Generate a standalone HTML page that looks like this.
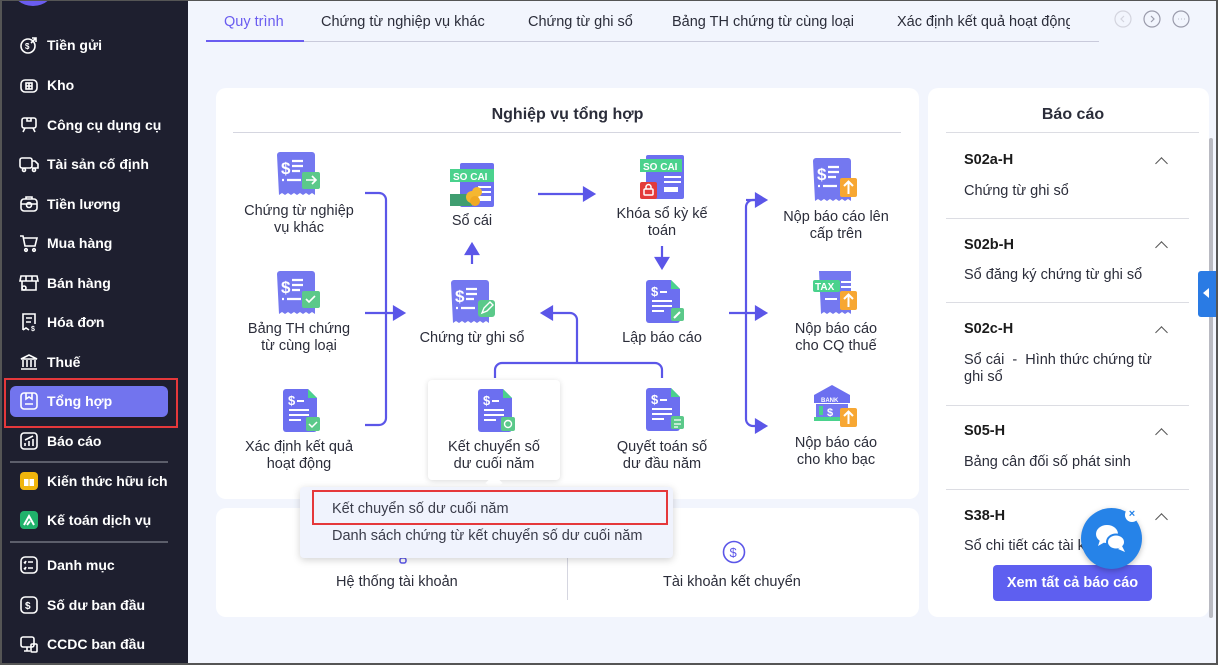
<!DOCTYPE html>
<html><head><meta charset="utf-8">
<style>
*{box-sizing:border-box;margin:0;padding:0}
body{width:1218px;height:665px;overflow:hidden;background:#f2f5fd;font-family:"Liberation Sans","DejaVu Sans",sans-serif;position:relative;color:#2b2d3a}
.abs{position:absolute}
#frame{position:absolute;left:0;top:0;width:1218px;height:665px;border:1px solid #555;border-left:2px solid #555;border-right:2px solid #555;border-bottom:2px solid #555;pointer-events:none;z-index:50}
#side{position:absolute;left:0;top:0;width:188px;height:665px;background:#1e1f2f}
.si{position:absolute;left:19px;color:#fff;font-weight:600;font-size:14px;height:20px;line-height:20px;display:flex;align-items:center}
.si svg{width:20px;height:20px;margin-right:8px;flex:none}
.tab{position:absolute;top:14px;font-size:14.5px;color:#2b2d3a}
.card{position:absolute;background:#fff;border-radius:10px}
.lbl{position:absolute;text-align:center;font-size:14.5px;line-height:17px;color:#2b2d3a;width:150px}
.rh{position:absolute;left:964px;font-weight:bold;font-size:14.5px;color:#1b1b1b}
.rt{position:absolute;left:964px;font-size:14.5px;color:#2b2d3a;line-height:17px}
.hr{position:absolute;left:946px;width:243px;height:1px;background:#dcdde3}
.chev{position:absolute;left:1157px;width:9px;height:9px;border-left:1.5px solid #555;border-top:1.5px solid #555;transform:rotate(45deg)}
</style></head><body>
<div id="side">
 <div class="abs" style="left:12px;top:-30px;width:42px;height:36px;border-radius:50%;background:#fff;border:5px solid #6a5cf0"></div>
 <div class="abs" style="left:10px;top:386px;width:158px;height:31px;background:#7274ee;border-radius:6px"></div>
 <div class="abs" style="left:4px;top:378px;width:174px;height:50px;border:2px solid #e5383b"></div>
 <div class="abs" style="left:10px;top:461px;width:158px;height:2px;background:#5c5e6b"></div>
 <div class="abs" style="left:10px;top:541px;width:158px;height:2px;background:#5c5e6b"></div>
 <div class="si" style="top:35px"><svg viewBox="0 0 20 20" fill="none" stroke="#fff" stroke-width="1.6"><circle cx="9" cy="11" r="7"/><path d="M13 3h4v4M17 3l-5 5"/><text x="6" y="14" font-size="8" fill="#fff" stroke="none">$</text></svg>Tiền gửi</div>
 <div class="si" style="top:75px"><svg viewBox="0 0 20 20" fill="none" stroke="#fff" stroke-width="1.6"><rect x="2" y="5" width="16" height="12" rx="4"/><rect x="7" y="8" width="6" height="6"/><path d="M10 8v6M7 11h6"/></svg>Kho</div>
 <div class="si" style="top:115px"><svg viewBox="0 0 20 20" fill="none" stroke="#fff" stroke-width="1.6"><rect x="3" y="3" width="14" height="10" rx="2"/><path d="M6 13l-2 4M14 13l2 4M8 3v3h4V3"/></svg>Công cụ dụng cụ</div>
 <div class="si" style="top:154px"><svg viewBox="0 0 20 20" fill="none" stroke="#fff" stroke-width="1.6"><rect x="1" y="4" width="12" height="10" rx="2"/><path d="M13 7h3l3 3v4h-6"/><circle cx="5" cy="16" r="1.5"/><circle cx="15" cy="16" r="1.5"/></svg>Tài sản cố định</div>
 <div class="si" style="top:194px"><svg viewBox="0 0 20 20" fill="none" stroke="#fff" stroke-width="1.6"><rect x="2" y="5" width="16" height="12" rx="3"/><path d="M7 5V3h6v2M2 10h16"/><circle cx="10" cy="11" r="2.5"/></svg>Tiền lương</div>
 <div class="si" style="top:233px"><svg viewBox="0 0 20 20" fill="none" stroke="#fff" stroke-width="1.6"><path d="M1 3h3l2 10h10l2-8H5"/><circle cx="7" cy="17" r="1.3"/><circle cx="15" cy="17" r="1.3"/></svg>Mua hàng</div>
 <div class="si" style="top:273px"><svg viewBox="0 0 20 20" fill="none" stroke="#fff" stroke-width="1.6"><path d="M3 8V17h14V8M2 3h16l1 5H1z"/><path d="M7 3v5M13 3v5"/><circle cx="5" cy="15" r="2"/></svg>Bán hàng</div>
 <div class="si" style="top:312px"><svg viewBox="0 0 20 20" fill="none" stroke="#fff" stroke-width="1.6"><path d="M4 18V2h12v10M7 6h6M7 10h5M4 18l3-2 3 2"/><text x="12" y="19" font-size="7" fill="#fff" stroke="none">$</text></svg>Hóa đơn</div>
 <div class="si" style="top:352px"><svg viewBox="0 0 20 20" fill="none" stroke="#fff" stroke-width="1.6"><path d="M2 7l8-4 8 4zM4 8v7M8 8v7M12 8v7M16 8v7M2 17h16"/></svg>Thuế</div>
 <div class="si" style="top:391px"><svg viewBox="0 0 20 20" fill="none" stroke="#fff" stroke-width="1.6"><rect x="2" y="2" width="16" height="16" rx="3"/><path d="M7 2v6l3-2 3 2V2M6 13h8"/></svg>Tổng hợp</div>
 <div class="si" style="top:431px"><svg viewBox="0 0 20 20" fill="none" stroke="#fff" stroke-width="1.6"><rect x="2" y="2" width="16" height="16" rx="3"/><path d="M6 15v-3M10 15v-5M14 15V8M6 9l8-4"/></svg>Báo cáo</div>
 <div class="si" style="top:471px"><svg viewBox="0 0 20 20"><rect x="1" y="1" width="18" height="18" rx="4" fill="#f0b50c"/><path d="M5 8h10v7H5z" fill="#fff"/><path d="M10 8v7" stroke="#f0b50c"/></svg>Kiến thức hữu ích</div>
 <div class="si" style="top:510px"><svg viewBox="0 0 20 20"><rect x="1" y="1" width="18" height="18" rx="4" fill="#20b26b"/><path d="M5 15l5-9 5 9M8 15l3-4" stroke="#fff" stroke-width="2" fill="none"/></svg>Kế toán dịch vụ</div>
 <div class="si" style="top:555px"><svg viewBox="0 0 20 20" fill="none" stroke="#fff" stroke-width="1.6"><rect x="2" y="2" width="16" height="16" rx="4"/><path d="M9 7h5M9 13h5M5 7l1 1 1-2M5 13l1 1 1-2"/></svg>Danh mục</div>
 <div class="si" style="top:595px"><svg viewBox="0 0 20 20" fill="none" stroke="#fff" stroke-width="1.6"><rect x="2" y="2" width="16" height="16" rx="4"/><text x="6" y="14" font-size="10" fill="#fff" stroke="none">$</text></svg>Số dư ban đầu</div>
 <div class="si" style="top:634px"><svg viewBox="0 0 20 20" fill="none" stroke="#fff" stroke-width="1.6"><rect x="2" y="3" width="13" height="10" rx="2"/><path d="M5 17h6M8 13v4"/><rect x="12" y="10" width="6" height="8" rx="1"/></svg>CCDC ban đầu</div>
</div>

<div class="tab" style="left:224px;color:#6a5cf0">Quy trình</div>
<div class="tab" style="left:321px">Chứng từ nghiệp vụ khác</div>
<div class="tab" style="left:528px">Chứng từ ghi sổ</div>
<div class="tab" style="left:672px">Bảng TH chứng từ cùng loại</div>
<div class="tab" style="left:897px;width:173px;overflow:hidden;white-space:nowrap">Xác định kết quả hoạt động</div>
<div class="abs" style="left:206px;top:41px;width:893px;height:1px;background:#c9cadb"></div>
<div class="abs" style="left:206px;top:40px;width:98px;height:2px;background:#6a5cf0"></div>
<svg class="abs" style="left:1114px;top:10px" width="80" height="20" fill="none" stroke-width="1.2"><circle cx="9" cy="9" r="8" stroke="#d3d4de"/><path d="M10 6l-3 3 3 3" stroke="#d3d4de"/><circle cx="38" cy="9" r="8" stroke="#9a9bab"/><path d="M37 6l3 3-3 3" stroke="#9a9bab"/><circle cx="67" cy="9" r="8" stroke="#9a9bab"/><path d="M64 9h.5M67 9h.5M70 9h.5" stroke="#9a9bab"/></svg>

<div class="card" style="left:216px;top:88px;width:703px;height:411px"></div>
<div class="abs" style="left:216px;top:106px;width:703px;text-align:center;font-weight:bold;font-size:16px;color:#2b2d3a">Nghiệp vụ tổng hợp</div>
<div class="abs" style="left:233px;top:132px;width:668px;height:1px;background:#d5d6e0"></div>

<svg class="abs" style="left:216px;top:88px" width="703" height="411" fill="none" stroke="#5b56e8" stroke-width="2.2">
 <path d="M149 105h14a7 7 0 0 1 7 7v218a7 7 0 0 1-7 7h-14"/>
 <path d="M149 225h30"/><path d="M178 219l10 6-10 6z" fill="#5b56e8"/>
 <path d="M256 176v-12"/><path d="M250 166l6-10 6 10z" fill="#5b56e8"/>
 <path d="M322 106h48"/><path d="M368 100l10 6-10 6z" fill="#5b56e8"/>
 <path d="M446 158v14"/><path d="M440 170l6 10 6-10z" fill="#5b56e8"/>
 <path d="M279 290v-8a7 7 0 0 1 7-7h153a7 7 0 0 1 7 7v8"/>
 <path d="M361 275v-43a7 7 0 0 0-7-7h-20"/><path d="M336 219l-10 6 10 6z" fill="#5b56e8"/>
 <path d="M513 225h30"/>
 <path d="M543 112h-6a7 7 0 0 0-7 7v212a7 7 0 0 0 7 7h6"/>
 <path d="M530 112h12"/><path d="M540 106l10 6-10 6z" fill="#5b56e8"/>
 <path d="M540 219l10 6-10 6z" fill="#5b56e8"/>
 <path d="M540 332l10 6-10 6z" fill="#5b56e8"/>
</svg>

<div class="abs" style="left:428px;top:380px;width:132px;height:100px;background:#fff;border-radius:4px;box-shadow:0 1px 6px rgba(0,0,0,.15)"></div>

<svg width="0" height="0" style="position:absolute">
 <defs>
  <g id="rc"><path d="M0 3a3 3 0 0 1 3-3h32a3 3 0 0 1 3 3v40l-3-2-3 2-3-2-3 2-3-2-3 2-3-2-3 2-3-2-3 2-3-2-3 2z" fill="#7478f0"/><text x="4" y="22" font-size="17" font-weight="bold" fill="#fff" font-family="Liberation Sans">$</text><path d="M15 9h11M15 14h11M15 19h8M5 28h2M10 28h14" stroke="#fff" stroke-width="2.2"/></g>
  <g id="dc"><path d="M0 3a3 3 0 0 1 3-3h22l9 9v31a3 3 0 0 1-3 3H3a3 3 0 0 1-3-3z" fill="#6c6ff0"/><path d="M25 0v9h9z" fill="#4ad28d"/><text x="5" y="16" font-size="13" font-weight="bold" fill="#fff" font-family="Liberation Sans">$</text><path d="M14 12h7M6 21h20M6 26h20M6 31h12" stroke="#fff" stroke-width="2"/></g>
 </defs>
</svg>

<svg class="abs" style="left:277px;top:152px" width="46" height="46"><use href="#rc"/><rect x="25" y="20" width="18" height="17" rx="2" fill="#5bc98a"/><path d="M29 28h10M35 24l4 4-4 4" stroke="#fff" stroke-width="1.6" fill="none"/></svg>
<div class="lbl" style="left:224px;top:203px">Chứng từ nghiệp<br>vụ khác</div>
<svg class="abs" style="left:277px;top:271px" width="46" height="46"><use href="#rc"/><rect x="25" y="20" width="18" height="17" rx="2" fill="#5bc98a"/><path d="M29 28l3 3 6-6" stroke="#fff" stroke-width="1.6" fill="none"/></svg>
<div class="lbl" style="left:224px;top:321px">Bảng TH chứng<br>từ cùng loại</div>
<svg class="abs" style="left:283px;top:389px" width="46" height="46"><use href="#dc"/><rect x="23" y="28" width="14" height="14" rx="2" fill="#5bc98a"/><path d="M26 35l3 3 5-5" stroke="#fff" stroke-width="1.5" fill="none"/></svg>
<div class="lbl" style="left:224px;top:439px">Xác định kết quả<br>hoạt động</div>
<svg class="abs" style="left:450px;top:163px" width="46" height="46"><rect x="10" y="0" width="34" height="44" rx="2" fill="#6c6ff0"/><rect x="0" y="6" width="44" height="13" fill="#4ad28d"/><text x="3" y="17" font-size="10" font-weight="bold" fill="#fff" font-family="Liberation Sans">SO CAI</text><path d="M28 24h13M28 29h13" stroke="#fff" stroke-width="2"/><rect x="28" y="33" width="13" height="5" fill="#fff"/><rect x="0" y="31" width="22" height="12" fill="#3f9e70"/><circle cx="22" cy="34" r="6" fill="#f5b731"/><circle cx="27" cy="29" r="5" fill="#f5b731"/><circle cx="25" cy="38" r="5" fill="#f0a823"/></svg>
<div class="lbl" style="left:397px;top:213px">Sổ cái</div>
<svg class="abs" style="left:451px;top:280px" width="46" height="46"><use href="#rc"/><rect x="27" y="20" width="17" height="17" rx="3" fill="#5bc98a"/><path d="M31 33l2-5 6-6 3 3-6 6z" stroke="#fff" stroke-width="1.4" fill="none"/></svg>
<div class="lbl" style="left:397px;top:330px">Chứng từ ghi sổ</div>
<svg class="abs" style="left:640px;top:155px" width="46" height="46"><rect x="6" y="0" width="38" height="44" rx="2" fill="#6c6ff0"/><rect x="0" y="4" width="42" height="13" fill="#4ad28d"/><text x="3" y="15" font-size="10" font-weight="bold" fill="#fff" font-family="Liberation Sans">SO CAI</text><path d="M24 22h17M24 27h17" stroke="#fff" stroke-width="2"/><rect x="24" y="32" width="14" height="5" fill="#fff"/><rect x="0" y="27" width="17" height="17" rx="2" fill="#e33b3b"/><rect x="4" y="34" width="9" height="6" rx="1" stroke="#fff" stroke-width="1.5" fill="none"/><path d="M6 34v-2a2.5 2.5 0 0 1 5 0v2" stroke="#fff" stroke-width="1.5" fill="none"/></svg>
<div class="lbl" style="left:587px;top:206px">Khóa sổ kỳ kế<br>toán</div>
<svg class="abs" style="left:646px;top:280px" width="46" height="46"><use href="#dc"/><rect x="25" y="28" width="13" height="13" rx="2" fill="#5bc98a"/><path d="M28 38l6-6" stroke="#fff" stroke-width="2"/></svg>
<div class="lbl" style="left:587px;top:330px">Lập báo cáo</div>
<svg class="abs" style="left:478px;top:389px" width="46" height="46"><use href="#dc"/><rect x="23" y="28" width="14" height="14" rx="2" fill="#5bc98a"/><circle cx="30" cy="35" r="3.5" stroke="#fff" stroke-width="1.4" fill="none"/></svg>
<div class="lbl" style="left:419px;top:439px">Kết chuyển số<br>dư cuối năm</div>
<svg class="abs" style="left:646px;top:388px" width="46" height="46"><use href="#dc"/><rect x="25" y="28" width="13" height="13" rx="2" fill="#5bc98a"/><path d="M28 32h7M28 36h7M28 39h4" stroke="#fff" stroke-width="1.3"/></svg>
<div class="lbl" style="left:587px;top:439px">Quyết toán số<br>dư đầu năm</div>
<svg class="abs" style="left:813px;top:158px" width="46" height="46"><use href="#rc"/><rect x="27" y="20" width="17" height="19" rx="2" fill="#f7a733"/><path d="M35.5 36v-12M31 28l4.5-4.5L40 28" stroke="#fff" stroke-width="2" fill="none"/></svg>
<div class="lbl" style="left:761px;top:209px">Nộp báo cáo lên<br>cấp trên</div>
<svg class="abs" style="left:813px;top:271px" width="46" height="46"><path d="M6 0h32v43l-3-2-3 2-3-2-3 2-3-2-3 2-3-2-3 2-3-2-3 2z" fill="#7478f0"/><rect x="0" y="9" width="27" height="12" rx="2" fill="#4ad28d"/><text x="2" y="19" font-size="10" font-weight="bold" fill="#fff" font-family="Liberation Sans">TAX</text><path d="M28 11h10M28 16h10M12 28h12" stroke="#fff" stroke-width="2"/><rect x="27" y="20" width="17" height="19" rx="2" fill="#f7a733"/><path d="M35.5 36v-12M31 28l4.5-4.5L40 28" stroke="#fff" stroke-width="2" fill="none"/></svg>
<div class="lbl" style="left:761px;top:321px">Nộp báo cáo<br>cho CQ thuế</div>
<svg class="abs" style="left:813px;top:383px" width="46" height="46"><path d="M1 12L19 2l18 10z" fill="#6c6ff0"/><rect x="1" y="12" width="36" height="8" fill="#6c6ff0"/><text x="8" y="19" font-size="6" font-weight="bold" fill="#fff" font-family="Liberation Sans">BANK</text><rect x="3" y="21" width="32" height="13" fill="#7478f0"/><rect x="6" y="23" width="4" height="9" fill="#4ad28d"/><text x="14" y="33" font-size="11" font-weight="bold" fill="#fff" font-family="Liberation Sans">$</text><rect x="1" y="34" width="36" height="4" fill="#4ad28d"/><rect x="27" y="25" width="17" height="19" rx="2" fill="#f7a733"/><path d="M35.5 41v-12M31 33l4.5-4.5L40 33" stroke="#fff" stroke-width="2" fill="none"/></svg>
<div class="lbl" style="left:761px;top:435px">Nộp báo cáo<br>cho kho bạc</div>

<div class="card" style="left:216px;top:508px;width:703px;height:109px"></div>
<div class="abs" style="left:567px;top:530px;width:1px;height:70px;background:#d5d6e0"></div>
<div class="abs" style="left:336px;top:574px;font-size:14.5px">Hệ thống tài khoản</div>
<div class="abs" style="left:663px;top:574px;font-size:14.5px">Tài khoản kết chuyển</div>
<svg class="abs" style="left:722px;top:540px" width="24" height="24" fill="none" stroke="#5b56e8" stroke-width="1.6"><circle cx="12" cy="12" r="10.5"/><text x="7.5" y="17" font-size="13" fill="#5b56e8" stroke="none" font-family="Liberation Sans">$</text></svg>
<svg class="abs" style="left:398px;top:555px" width="12" height="12"><rect x="2" y="3" width="6" height="5" rx="2" stroke="#5b56e8" stroke-width="1.5" fill="none"/></svg>

<div class="abs" style="left:488px;top:477px;width:12px;height:12px;background:#fff;transform:rotate(45deg)"></div>
<div class="abs" style="left:300px;top:487px;width:373px;height:71px;background:#f0f3fd;border-radius:4px;box-shadow:0 2px 8px rgba(0,0,0,.18)"></div>
<div class="abs" style="left:312px;top:490px;width:356px;height:35px;border:2px solid #e5383b"></div>
<div class="abs" style="left:332px;top:501px;font-size:14.5px;color:#3a3c4a">Kết chuyển số dư cuối năm</div>
<div class="abs" style="left:332px;top:528px;font-size:14.5px;color:#3a3c4a">Danh sách chứng từ kết chuyển số dư cuối năm</div>

<div class="card" style="left:928px;top:88px;width:281px;height:529px;overflow:hidden"></div>
<div class="abs" style="left:928px;top:106px;width:290px;text-align:center;font-weight:bold;font-size:16px;color:#2b2d3a">Báo cáo</div>
<div class="hr" style="top:132px;width:253px"></div>
<div class="rh" style="top:152px">S02a-H</div><div class="chev" style="top:159px"></div>
<div class="rt" style="top:183px">Chứng từ ghi sổ</div>
<div class="hr" style="top:218px"></div>
<div class="rh" style="top:237px">S02b-H</div><div class="chev" style="top:243px"></div>
<div class="rt" style="top:267px">Sổ đăng ký chứng từ ghi sổ</div>
<div class="hr" style="top:302px"></div>
<div class="rh" style="top:321px">S02c-H</div><div class="chev" style="top:328px"></div>
<div class="rt" style="top:352px">Sổ cái&nbsp; - &nbsp;Hình thức chứng từ<br>ghi sổ</div>
<div class="hr" style="top:405px"></div>
<div class="rh" style="top:423px">S05-H</div><div class="chev" style="top:430px"></div>
<div class="rt" style="top:454px">Bảng cân đối số phát sinh</div>
<div class="hr" style="top:489px"></div>
<div class="rh" style="top:508px">S38-H</div><div class="chev" style="top:515px"></div>
<div class="abs" style="left:964px;top:538px;width:120px;height:16px;overflow:hidden;white-space:nowrap;font-size:14.5px;line-height:17px">Sổ chi tiết các tài khoản</div>
<div class="abs" style="left:1209px;top:138px;width:4px;height:480px;background:#b9bac2;border-radius:2px"></div>
<div class="abs" style="left:1198px;top:271px;width:20px;height:46px;background:#2a7be4;border-radius:3px 0 0 3px"></div>
<div class="abs" style="left:1203px;top:288px;width:0;height:0;border-top:5px solid transparent;border-bottom:5px solid transparent;border-right:6px solid #fff"></div>
<div class="abs" style="left:993px;top:565px;width:159px;height:36px;background:#5e5ff0;border-radius:4px;color:#fff;font-weight:bold;font-size:14.5px;text-align:center;line-height:36px">Xem tất cả báo cáo</div>
<div class="abs" style="left:1081px;top:508px;width:61px;height:61px;border-radius:50%;background:#2683e8;box-shadow:0 2px 6px rgba(0,0,0,.25)"></div>
<svg class="abs" style="left:1094px;top:522px" width="36" height="34"><ellipse cx="13" cy="12" rx="11" ry="9" fill="#fff"/><path d="M6 18l-2 6 7-4z" fill="#fff"/><ellipse cx="22" cy="20" rx="10" ry="8.5" fill="#2683e8"/><ellipse cx="22" cy="20" rx="8" ry="6.5" fill="#fff"/><path d="M28 24l3 6-7-3z" fill="#fff"/></svg>
<div class="abs" style="left:1125px;top:508px;width:14px;height:14px;border-radius:50%;background:#fff;color:#2683e8;font-size:11px;font-weight:bold;text-align:center;line-height:13px">×</div>

<div id="frame"></div>
</body></html>
